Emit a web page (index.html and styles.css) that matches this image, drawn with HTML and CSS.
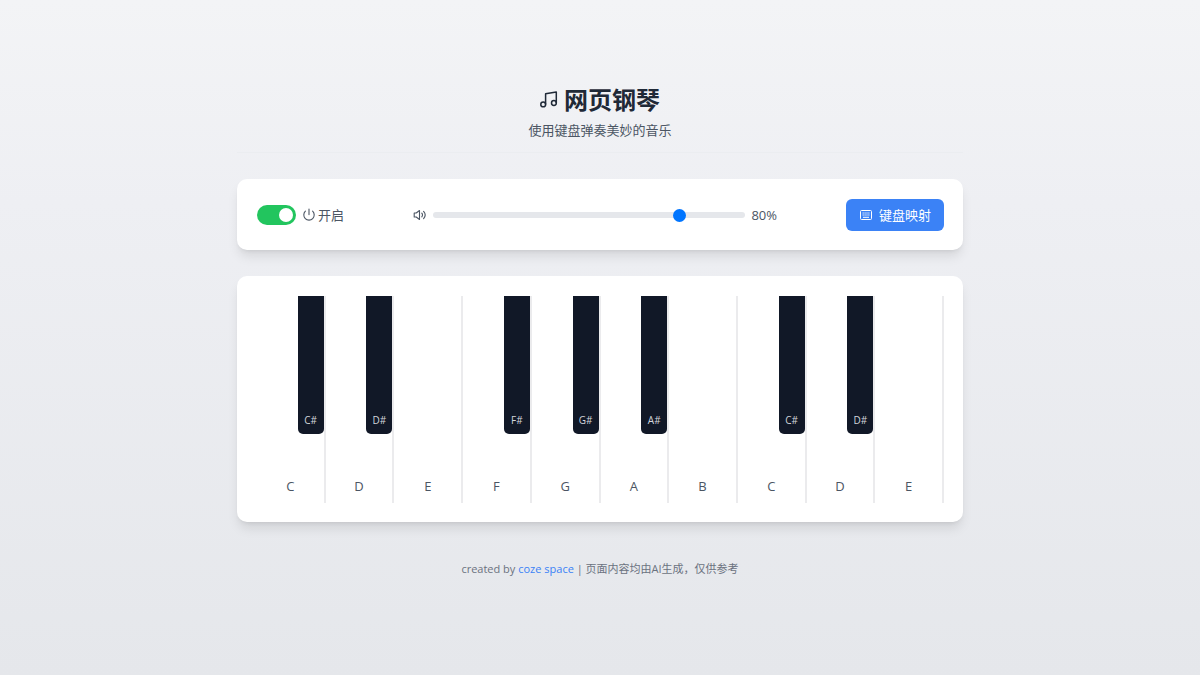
FILE: index.html
```
<!DOCTYPE html>
<html lang="zh-CN">
<head>
    <meta charset="UTF-8">
    <meta name="viewport" content="width=device-width, initial-scale=1.0">
    <title>网页钢琴</title>
    <link rel="stylesheet" href="styles.css">
</head>
<body>
    <div class="container">
        <header class="header">
            <h1>
                <svg class="icon-music" viewBox="0 0 18 18" fill="none" stroke="currentColor" stroke-width="1.5" stroke-linejoin="round" aria-hidden="true">
                    <circle cx="3.2" cy="13.4" r="2.4"/>
                    <circle cx="13.9" cy="12" r="2.4"/>
                    <path d="M5.6 13.4V2.8L16.3 1V12"/>
                </svg>
                网页钢琴
            </h1>
            <p>使用键盘弹奏美妙的音乐</p>
        </header>

        <div class="card controls">
            <label class="power">
                <input type="checkbox" class="switch" id="power" checked>
                <svg class="icon" viewBox="0 0 14 14" fill="none" stroke="currentColor" stroke-width="1.1" stroke-linecap="round" aria-hidden="true">
                    <path d="M7 1V6.6M3.4 3.2A5.2 5.2 0 1 0 10.6 3.2"/>
                </svg>
                <span id="power-text">开启</span>
            </label>
            <div class="volume">
                <svg class="icon" viewBox="0 0 14 14" fill="none" stroke="currentColor" stroke-width="1.1" stroke-linejoin="round" stroke-linecap="round" aria-hidden="true">
                    <path d="M1.2 5H3.2L6.5 2.5V11.5L3.2 9H1.2ZM8.8 5.2Q10.2 7 8.8 8.8M10.6 3.4Q13.8 7 10.6 10.6"/>
                </svg>
                <input type="range" id="volume" min="0" max="100" value="80" aria-label="音量">
                <label for="volume" id="volume-text">80%</label>
            </div>
            <button class="map-btn">
                <svg class="icon" viewBox="0 0 14 14" fill="none" stroke="currentColor" aria-hidden="true">
                    <rect x="1.5" y="2.5" width="11" height="9" rx="1"/>
                    <path d="M3.5 5H10.5M3.5 7H10.5" stroke-dasharray="1.4 .5" stroke-width=".9"/>
                    <path d="M4 9.3H10"/>
                </svg>
                键盘映射
            </button>
        </div>

        <div class="card">
            <div class="piano">
                <div class="key"><button class="white">C</button><button class="black">C#</button></div>
                <div class="key"><button class="white">D</button><button class="black">D#</button></div>
                <div class="key"><button class="white">E</button></div>
                <div class="key"><button class="white">F</button><button class="black">F#</button></div>
                <div class="key"><button class="white">G</button><button class="black">G#</button></div>
                <div class="key"><button class="white">A</button><button class="black">A#</button></div>
                <div class="key"><button class="white">B</button></div>
                <div class="key"><button class="white">C</button><button class="black">C#</button></div>
                <div class="key"><button class="white">D</button><button class="black">D#</button></div>
                <div class="key"><button class="white">E</button></div>
            </div>
        </div>

        <footer class="footer">
            created by <a href="#">coze space</a> | 页面内容均由AI生成，仅供参考
        </footer>
    </div>

    <script>
        document.getElementById('power').addEventListener('change', (e) => {
            document.getElementById('power-text').innerText = e.target.checked ? '开启' : '关闭';
        });

        document.getElementById('volume').addEventListener('input', (e) => {
            document.getElementById('volume-text').innerText = e.target.value + '%';
        });
    </script>
</body>
</html>
```
FILE: styles.css
```
* {
    box-sizing: border-box;
}
body {
    margin: 0;
    min-height: 100vh;
    padding: 84px 16px 32px;
    background: linear-gradient(to bottom, #f3f4f6, #eeeff3 30%, #e5e7eb);
    font-family: "Open Sans", "Noto Sans CJK SC", sans-serif;
    font-size: 13px;
    line-height: 20px;
    color: #4b5563;
}
button, input {
    font: inherit;
    color: inherit;
    margin: 0;
}
.container {
    max-width: 726px;
    margin: 0 auto;
}
.header {
    text-align: center;
    padding-bottom: 12px;
    margin-bottom: 26px;
    border-bottom: 1px solid #ebedf0;
}
.header h1 {
    display: flex;
    align-items: center;
    justify-content: center;
    gap: 6px;
    margin: 0 0 4px;
    font-size: 24px;
    line-height: 32px;
    font-weight: 700;
    color: #1f2937;
}
.header p {
    margin: 0;
}
.icon-music {
    width: 18px;
    height: 18px;
}
.icon {
    width: 14px;
    height: 14px;
    flex-shrink: 0;
}
.card {
    background: #fff;
    border-radius: 10px;
    padding: 20px 19px 19px 20px;
    margin-bottom: 26px;
    box-shadow: 0 8px 12px -2px rgba(0, 0, 0, 0.1), 0 3px 5px -3px rgba(0, 0, 0, 0.1);
}
.controls {
    display: flex;
    align-items: center;
    justify-content: space-between;
}
.power {
    display: flex;
    align-items: center;
    gap: 2px;
    cursor: pointer;
}
.switch {
    appearance: none;
    width: 39px;
    height: 20px;
    padding: 3px;
    margin-right: 4px;
    border-radius: 10px;
    background: #d1d5db;
    cursor: pointer;
}
.switch::before {
    content: "";
    display: block;
    width: 14px;
    height: 14px;
    border-radius: 50%;
    background: #fff;
}
.switch:checked {
    background: #22c55e;
}
.switch:checked::before {
    margin-left: auto;
}
.volume {
    display: flex;
    align-items: center;
    gap: 6px;
    width: 53%;
}
.volume input {
    appearance: none;
    flex: 1;
    min-width: 0;
    height: 6px;
    border-radius: 3px;
    background: #e5e7eb;
}
.volume input::-webkit-slider-thumb {
    appearance: none;
    width: 13px;
    height: 13px;
    border-radius: 50%;
    background: #0075ff;
}
.map-btn {
    display: flex;
    align-items: center;
    gap: 6px;
    height: 32px;
    padding: 0 13px;
    border: none;
    border-radius: 6px;
    background: #3b82f6;
    color: #fff;
    cursor: pointer;
}
.piano {
    display: flex;
    height: 207px;
}
.key {
    position: relative;
    flex: 1;
}
.white {
    display: flex;
    align-items: flex-end;
    justify-content: center;
    width: 100%;
    height: 100%;
    padding: 0 0 7px;
    border: none;
    border-right: 2px solid #ebebed;
    background: #fff;
}
.black {
    position: absolute;
    top: 0;
    right: 2px;
    display: flex;
    align-items: flex-end;
    justify-content: center;
    width: 26px;
    height: 138px;
    padding: 0 0 4px;
    border: none;
    border-radius: 0 0 5px 5px;
    background: #111827;
    color: #d1d5db;
    font-size: 10px;
}
.footer {
    margin-top: 37px;
    text-align: center;
    font-size: 11px;
    color: #6b7280;
}
.footer a {
    color: #3b82f6;
    text-decoration: none;
}
```
